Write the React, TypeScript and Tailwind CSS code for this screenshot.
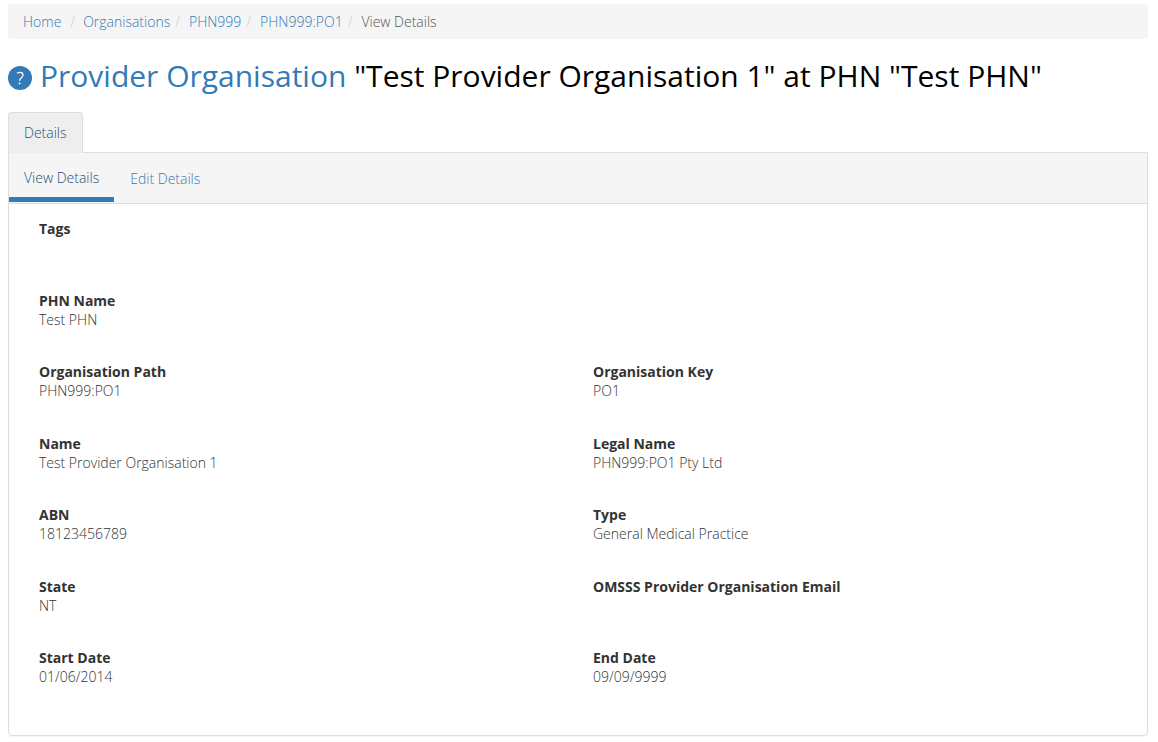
import React from "react";

type Field = { label: string; value?: string; wide?: boolean };

const crumbs = ["Home", "Organisations", "PHN999", "PHN999:PO1"];

const fields: Field[] = [
  { label: "Tags", wide: true },
  { label: "PHN Name", value: "Test PHN", wide: true },
  { label: "Organisation Path", value: "PHN999:PO1" },
  { label: "Organisation Key", value: "PO1" },
  { label: "Name", value: "Test Provider Organisation 1" },
  { label: "Legal Name", value: "PHN999:PO1 Pty Ltd" },
  { label: "ABN", value: "18123456789" },
  { label: "Type", value: "General Medical Practice" },
  { label: "State", value: "NT" },
  { label: "OMSSS Provider Organisation Email" },
  { label: "Start Date", value: "01/06/2014" },
  { label: "End Date", value: "09/09/9999" },
];

function Breadcrumbs() {
  return (
    <nav aria-label="Breadcrumb" className="rounded bg-[#f5f5f5] px-[15px] py-2">
      <ol className="flex flex-wrap leading-[19px]">
        {crumbs.map((name, i) => (
          <li key={name} className="flex">
            <a href="#" className="text-[#337ab7]">{name}</a>
            <span aria-hidden="true" className={i === 0 ? "pr-2 pl-[9px] text-[#ccc]" : "pr-[9px] pl-[5px] text-[#ccc]"}>/</span>
          </li>
        ))}
        <li aria-current="page" className="text-[#555]">View Details</li>
      </ol>
    </nav>
  );
}

function HelpIcon() {
  return (
    <svg viewBox="0 0 24 24" className="mt-[3px] size-6 shrink-0" aria-hidden="true">
      <circle cx="12" cy="12" r="12" fill="#337ab7" />
      <path d="M8.9 7.3C10 6.7 11 6.4 12 6.4c1.8 0 3 1 3 2.6 0 1.3-.7 2-1.8 2.9-1.1.9-1.6 1.4-1.6 2.9" fill="none" stroke="#fff" strokeWidth="1.25" />
      <circle cx="11.6" cy="17.4" r=".95" fill="#fff" />
    </svg>
  );
}

export default function App() {
  return (
    <div className="pt-1 pr-2.5 pb-1.5 pl-2 font-['Open_Sans',sans-serif] text-sm font-light text-[#333]">
      <Breadcrumbs />
      <h1 className="mt-[17px] flex items-center gap-2 text-[30px] leading-10 font-normal text-black">
        <HelpIcon />
        <span><a href="#" className="text-[#337ab7]">Provider Organisation</a> "Test Provider Organisation 1" at PHN "Test PHN"</span>
      </h1>
      <nav aria-label="Sections" className="mt-4 flex">
        <a href="#" aria-current="page" className="-mb-px rounded-t border border-b-0 border-[#ddd] bg-[#eee] px-[15px] py-2.5 leading-5 text-[#23527c]">Details</a>
      </nav>
      <main className="rounded-b border border-[#ddd] shadow-[0_1px_1px_rgba(0,0,0,0.05)]">
        <nav aria-label="Detail views" className="flex border-b border-[#ddd] bg-[#f5f5f5] pb-px">
          <a href="#" aria-current="page" className="border-b-[5px] border-[#337ab7] px-[15px] pt-[15px] pb-2.5 leading-[19px] text-[#23527c]">View Details</a>
          <a href="#" className="px-4 pt-4 leading-[19px] text-[#337ab7]">Edit Details</a>
        </nav>
        <dl className="grid auto-rows-[72px_71px] grid-cols-2 py-[15px] leading-[19px]">
          {fields.map(({ label, value, wide }) => (
            <div key={label} className={wide ? "col-span-2 px-[30px]" : "px-[30px] even:pl-[15px]"}>
              <dt className="font-bold">{label}</dt>
              <dd>{value}</dd>
            </div>
          ))}
        </dl>
      </main>
    </div>
  );
}
